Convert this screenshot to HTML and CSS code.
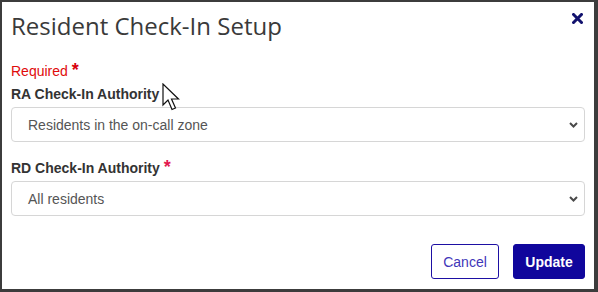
FILE: index.html
```html
<!DOCTYPE html>
<html lang="en">
<head>
<meta charset="utf-8">
<title>Resident Check-In Setup</title>
<link rel="stylesheet" href="styles.css">
</head>
<body>
<div class="modal">
  <div class="modal-header">
    <h1 class="modal-title">Resident Check-In Setup</h1>
    <button class="close-btn" aria-label="Close">
      <svg width="11" height="11" viewBox="0 0 11 11"><path d="M1.5 1.5 L9.5 9.5 M9.5 1.5 L1.5 9.5" stroke="#12126e" stroke-width="3" stroke-linecap="square"/></svg>
    </button>
  </div>
  <div class="required-note">Required <span class="star star-dark">*</span></div>
  <div class="field">
    <div class="field-label">RA Check-In Authority</div>
    <div class="select">
      <span class="select-value">Residents in the on-call zone</span>
      <svg class="chevron" width="9" height="6" viewBox="0 0 9 6"><path d="M1 1 L4.5 4.5 L8 1" fill="none" stroke="#4a4a4a" stroke-width="2"/></svg>
    </div>
  </div>
  <div class="field field-second">
    <div class="field-label">RD Check-In Authority <span class="star star-pink">*</span></div>
    <div class="select">
      <span class="select-value">All residents</span>
      <svg class="chevron" width="9" height="6" viewBox="0 0 9 6"><path d="M1 1 L4.5 4.5 L8 1" fill="none" stroke="#4a4a4a" stroke-width="2"/></svg>
    </div>
  </div>
  <div class="modal-footer">
    <button class="btn btn-outline">Cancel</button>
    <button class="btn btn-primary">Update</button>
  </div>
  <svg class="cursor" width="18" height="28" viewBox="0 0 18 28"><path d="M1 1 L1 22 L6 17 L10 26.5 L13.5 25 L9.5 16 L16.5 16 Z" fill="#fff" stroke="#111" stroke-width="1.2" stroke-linejoin="miter"/></svg>
</div>
</body>
</html>
```

FILE: styles.css
```css
html, body {
  margin: 0;
  padding: 0;
  background: #3c3c3c;
}

.modal {
  position: relative;
  box-sizing: border-box;
  width: 598px;
  height: 292px;
  background: #fff;
  border-style: solid;
  border-color: #3c3c3c;
  border-width: 2px 4px 3px 2px;
  padding: 0 9px;
  font-family: "Liberation Sans", Arial, sans-serif;
  font-size: 14px;
  color: #333;
}

.modal-header {
  display: flex;
  justify-content: space-between;
  align-items: flex-start;
  margin-top: 10px;
}

.modal-title {
  margin: 0;
  font-family: "Open Sans", "Liberation Sans", sans-serif;
  font-weight: 400;
  font-size: 24px;
  line-height: 28px;
  color: #3a3a3a;
}

.close-btn {
  border: 0;
  background: none;
  padding: 0;
  margin: 1px 2px 0 0;
  width: 11px;
  height: 11px;
  display: flex;
}

.required-note {
  margin-top: 21px;
  line-height: 20px;
  color: #e00b0b;
}

.star {
  font-size: 18px;
  font-weight: 700;
  line-height: 14px;
}

.star-dark {
  color: #d8000c;
}

.star-pink {
  color: #e3174f;
}

.field {
  margin-top: 3px;
}

.field-second {
  margin-top: 16px;
}

.field-label {
  font-weight: 700;
  line-height: 20px;
  color: #333;
}

.select {
  margin-top: 3px;
  box-sizing: border-box;
  height: 35px;
  border: 1px solid #d6d6d6;
  border-radius: 4px;
  padding: 0 6px 0 16px;
  display: flex;
  align-items: center;
  justify-content: space-between;
  color: #555;
}

.chevron {
  margin-top: 1px;
}

.modal-footer {
  display: flex;
  justify-content: flex-end;
  gap: 14px;
  margin-top: 28px;
}

.btn {
  box-sizing: border-box;
  height: 35px;
  border-radius: 3px;
  font-family: "Liberation Sans", Arial, sans-serif;
  font-size: 14px;
  padding: 0;
}

.btn-outline {
  width: 68px;
  background: #fff;
  border: 1px solid #1d0fa3;
  color: #4136b9;
}

.btn-primary {
  width: 72px;
  background: #10069c;
  border: 1px solid #10069c;
  color: #fff;
  font-weight: 700;
}

.cursor {
  position: absolute;
  left: 160px;
  top: 81px;
}
```
